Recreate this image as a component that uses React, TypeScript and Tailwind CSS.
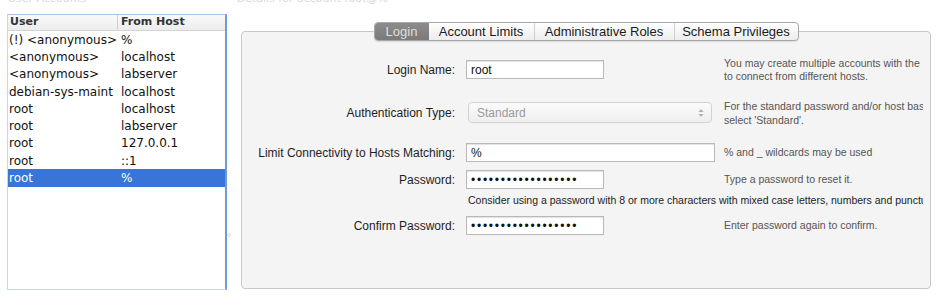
const users = [
  { user: '(!) <anonymous>', host: '%' },
  { user: '<anonymous>', host: 'localhost' },
  { user: '<anonymous>', host: 'labserver' },
  { user: 'debian-sys-maint', host: 'localhost' },
  { user: 'root', host: 'localhost' },
  { user: 'root', host: 'labserver' },
  { user: 'root', host: '127.0.0.1' },
  { user: 'root', host: '::1' },
  { user: 'root', host: '%', selected: true },
]

const tabs = [
  { name: 'Login', w: 'w-[54px]' },
  { name: 'Account Limits', w: 'w-[105px]' },
  { name: 'Administrative Roles', w: 'w-[140px]' },
  { name: 'Schema Privileges', w: 'w-[124px]' },
]

const dots = '••••••••••••••••••'
const sans = '"Liberation Sans", Arial, sans-serif'

function Field({ value, w, pw }: { value: string; w: string; pw?: boolean }) {
  return (
    <div className={`${w} h-[19px] bg-white border border-[#b9b9b9] shadow-[inset_0_1px_1px_rgba(0,0,0,0.12)] flex items-center pl-[4px] text-[12px] text-[#111] ${pw ? 'tracking-[1.75px]' : ''}`}>
      {value}
    </div>
  )
}

function Label({ children }: { children: string }) {
  return <div className="w-[214px] shrink-0 text-right text-[12px] text-[#1e1e1e] pr-[1px] whitespace-nowrap">{children}</div>
}

export default function App() {
  return (
    <div className="w-[943px] h-[299px] bg-white overflow-hidden relative" style={{ fontFamily: '"DejaVu Sans", sans-serif' }}>
      {/* clipped heading strip */}
      <div className="h-[14px] overflow-hidden flex text-[11px] text-[#dadada]">
        <div className="ml-[8px] -mt-[9px]">User Accounts</div>
        <div className="ml-[150px] -mt-[9px]">Details for account root@%</div>
      </div>

      <div className="flex">
        {/* user list */}
        <div className="ml-[7px] w-[220px] h-[276px] shrink-0 bg-white border-t border-t-[#a9c3e6] border-l border-l-[#c9d6e8] border-r-2 border-r-[#6f9ad6] border-b border-b-[#c9d6e8]">
          <div className="h-[16px] flex items-center text-[11px] font-bold text-[#333] bg-gradient-to-b from-[#fafafa] to-[#ececec] border-b border-[#d4d4d4]">
            <div className="w-[110px] pl-[2px] border-r border-[#d0d0d0] h-full flex items-center">User</div>
            <div className="pl-[3px]">From Host</div>
          </div>
          {users.map((u, i) => (
            <div key={i} className={`h-[17.3px] flex items-center text-[12px] ${u.selected ? 'bg-[#3875d7] text-white' : 'text-[#111]'}`}>
              <div className="w-[111px] pl-[1px] whitespace-nowrap">{u.user}</div>
              <div className="pl-[2px]">{u.host}</div>
            </div>
          ))}
        </div>

        {/* splitter handle */}
        <div className="w-[14px] shrink-0">
          <div className="mt-[219px] w-[4px] h-[4px] rounded-full border border-[#dcdcdc]"></div>
        </div>

        {/* details panel */}
        <div className="mt-[17px] w-[690px] h-[258px] shrink-0 bg-[#f4f4f4] border border-[#c8c8c8] rounded-[4px] flex flex-col" style={{ fontFamily: sans }}>
          <div className="-mt-[10px] flex justify-center">
            <div className="flex h-[19px] rounded-[4px] border border-[#a8a8a8] bg-gradient-to-b from-[#ffffff] to-[#ededed] overflow-hidden shadow-[0_1px_1px_rgba(0,0,0,0.1)]">
              {tabs.map((t, i) => (
                <div
                  key={t.name}
                  className={`${t.w} flex items-center justify-center text-[13px] ${i === 0 ? 'bg-gradient-to-b from-[#8c8c8c] to-[#7a7a7a] text-[#dedede]' : 'text-[#1a1a1a]'} ${i > 1 ? 'border-l border-[#cfcfcf]' : ''}`}
                >
                  {t.name}
                </div>
              ))}
            </div>
          </div>

          <div className="overflow-hidden mr-[7px] flex flex-col">
            {/* Login Name */}
            <div className="mt-[19px] h-[19px] flex items-center">
              <Label>Login Name:</Label>
              <div className="w-[259px] shrink-0 pl-[10px]"><Field value="root" w="w-[138px]" /></div>
              <div className="pl-[9px] text-[10.5px] leading-[13px] text-[#555] whitespace-nowrap">
                <div>You may create multiple accounts with the same name</div>
                <div>to connect from different hosts.</div>
              </div>
            </div>

            {/* Authentication Type */}
            <div className="mt-[23px] h-[21px] flex items-center">
              <Label>Authentication Type:</Label>
              <div className="w-[259px] shrink-0 pl-[12px]">
                <div className="w-[244px] h-[21px] rounded-[4px] border border-[#d2d2d2] bg-gradient-to-b from-[#fbfbfb] to-[#efefef] flex items-center justify-between pl-[8px] pr-[7px] text-[12px] text-[#9a9a9a]">
                  <span>Standard</span>
                  <svg width="6" height="10" viewBox="0 0 6 10">
                    <path d="M0.5 4 L3 1 L5.5 4 Z" fill="#b0b0b0" />
                    <path d="M0.5 6 L3 9 L5.5 6 Z" fill="#b0b0b0" />
                  </svg>
                </div>
              </div>
              <div className="pl-[9px] text-[10.5px] leading-[14px] text-[#555] whitespace-nowrap">
                <div>For the standard password and/or host based authentication,</div>
                <div>select 'Standard'.</div>
              </div>
            </div>

            {/* Limit Connectivity */}
            <div className="mt-[20px] h-[19px] flex items-center">
              <Label>Limit Connectivity to Hosts Matching:</Label>
              <div className="w-[259px] shrink-0 pl-[10px]"><Field value="%" w="w-[249px]" /></div>
              <div className="pl-[9px] text-[10.5px] text-[#555] whitespace-nowrap">% and _ wildcards may be used</div>
            </div>

            {/* Password */}
            <div className="mt-[8px] h-[19px] flex items-center">
              <Label>Password:</Label>
              <div className="w-[259px] shrink-0 pl-[10px]"><Field value={dots} w="w-[138px]" pw /></div>
              <div className="pl-[9px] text-[10.5px] text-[#555] whitespace-nowrap">Type a password to reset it.</div>
            </div>

            {/* hint */}
            <div className="mt-[5px] h-[14px] flex items-center">
              <div className="ml-[226px] text-[10.5px] text-[#222] whitespace-nowrap">
                Consider using a password with 8 or more characters with mixed case letters, numbers and punctuation marks.
              </div>
            </div>

            {/* Confirm */}
            <div className="mt-[8px] h-[19px] flex items-center">
              <Label>Confirm Password:</Label>
              <div className="w-[259px] shrink-0 pl-[10px]"><Field value={dots} w="w-[138px]" pw /></div>
              <div className="pl-[9px] text-[10.5px] text-[#555] whitespace-nowrap">Enter password again to confirm.</div>
            </div>
          </div>
        </div>
      </div>
    </div>
  )
}
